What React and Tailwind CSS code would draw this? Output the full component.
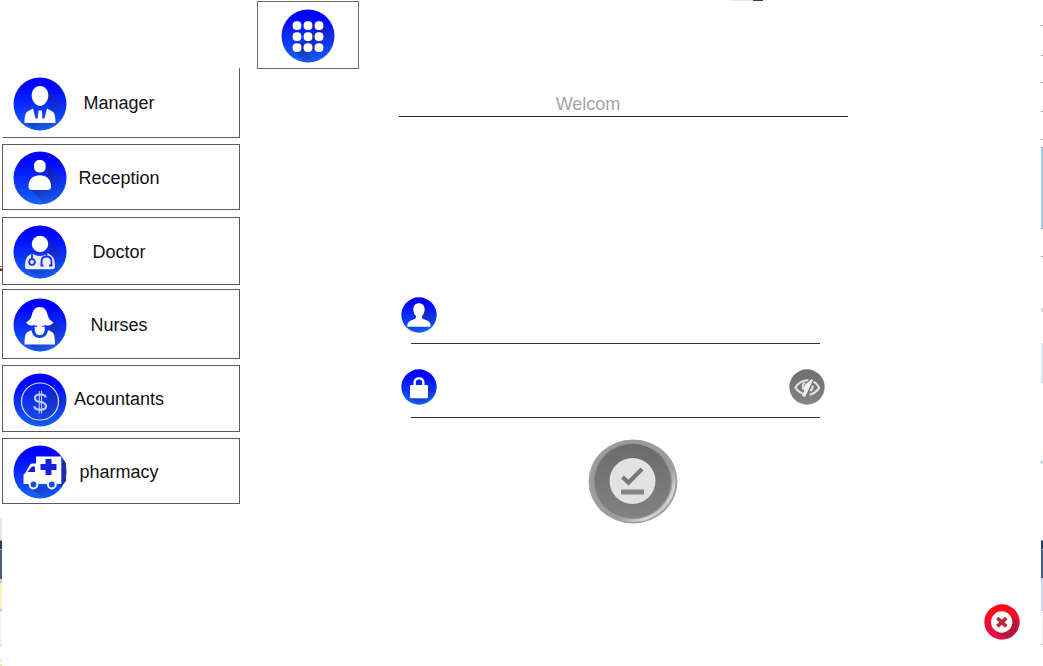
import { useId } from "react";

function Disc({ className, top = "#0000ff", bottom = "#1464f8", shadow, children }) {
  const id = useId();
  return (
    <svg viewBox="0 0 54 54" className={className} aria-hidden="true">
      <defs>
        <linearGradient id={`${id}f`} x1="0" y1="0" x2="0" y2="1">
          <stop offset="0.12" stopColor={top} />
          <stop offset="1" stopColor={bottom} />
        </linearGradient>
        <linearGradient id={`${id}s`} x1="0.2" y1="0.2" x2="0.9" y2="0.9">
          <stop offset="0.15" stopColor="#22207c" stopOpacity="0.65" />
          <stop offset="0.85" stopColor="#22308c" stopOpacity="0" />
        </linearGradient>
        <clipPath id={`${id}c`}>
          <circle cx="27" cy="27" r="26.5" />
        </clipPath>
      </defs>
      <circle cx="27" cy="27" r="26.5" fill={`url(#${id}f)`} />
      {shadow && <path d={shadow} fill={`url(#${id}s)`} clipPath={`url(#${id}c)`} />}
      {children}
    </svg>
  );
}

function ManagerIcon() {
  return (
    <Disc className="size-[54px] shrink-0" shadow="M32 11L54 33V54H24L12 46L42 44Z">
      <path fill="#fff" d="M27 9c5 0 8.300 4 8.300 9.300S31.500 29 27 29s-8.300-5.400-8.300-10.700S22 9 27 9z" />
      <path fill="#fff" d="M20 31.500L14.500 34.500C12 36 11.500 41 11.500 46H42.500C42.500 41 42 36 39.500 34.500L34 31.500L31.500 41.500H29.300L29 33.500H25.500L24.700 41.500H22.500Z" />
    </Disc>
  );
}

function ReceptionIcon() {
  return (
    <Disc className="size-[54px] shrink-0" shadow="M32 12L54 34V54H34L17 38L37 38Z">
      <rect x="21" y="9" width="11.600" height="12.400" rx="5" fill="#fff" />
      <path fill="#fff" d="M15.500 35.500C15.500 28 20.500 24.300 26.800 24.300S38 28 38 35.500C38 37.800 37 39 35 39H18.500C16.500 39 15.500 37.800 15.500 35.500Z" />
    </Disc>
  );
}

function DoctorIcon() {
  return (
    <Disc className="size-[54px] shrink-0" shadow="M34 14L54 34V54H26L13 43L42 42Z">
      <circle cx="27" cy="19" r="8.200" fill="#fff" />
      <path fill="#eeeeff" d="M19.500 28L15 31C12.500 33.500 12 38 12 41.500Q12 44.300 15 44.300H39Q42 44.300 42 41.500C42 38 41.500 33.500 39 31L34.500 28Q27 32.500 19.500 28Z" />
      <g fill="none" stroke="#1a34ee" strokeWidth="1.800">
        <path d="M19 28V34" />
        <circle cx="19" cy="37" r="2.900" />
        <path d="M19 27.500Q27 32.500 34.500 27.500M33.500 29V31.500M28.500 41V36.500Q28.500 31.500 33.500 31.500Q38.500 31.500 38.500 36.500V41M27.500 40.500H30.500M36 40.500H39.500" />
      </g>
    </Disc>
  );
}

function NurseIcon() {
  return (
    <Disc className="size-[54px] shrink-0" shadow="M34 22L41 24L54 34V54H26L13 45L42 44Z">
      <path fill="#fff" d="M26.700 9C31.500 9 33.500 12.500 34.500 16.500C35.500 20.500 37 22.500 40.500 24.500C38.500 27.300 35.500 27.800 32.500 27.500Q32 31 29.800 31.800H23.700Q21.500 31 21 27.500C18 27.800 15.200 27.300 13 24.500C16.500 22.500 18 20.500 19 16.500C20 12.500 22 9 26.700 9Z" />
      <path fill="none" stroke="#1428f8" strokeWidth="1.300" d="M20.500 28Q22.500 27.600 24 28.800M33 28Q31 27.600 29.500 28.800" />
      <path fill="#fff" d="M18.500 32L14.500 34C12 35.500 11.500 40 11.500 46.500H42C42 40 41.500 35.500 39 34L35 32C34.500 37 31 40 26.700 40S19 37 18.500 32Z" />
      <path fill="#fff" d="M21.500 30.500H32Q31.500 37.300 26.700 37.300T21.500 30.500Z" />
    </Disc>
  );
}

function AccountantIcon() {
  return (
    <Disc className="size-[54px] shrink-0" shadow="M40 16L54 30V54H30L14 42L27 46Z">
      <circle cx="27" cy="28.500" r="18.500" fill="#193ccc" fillOpacity="0.35" stroke="#dcdcff" strokeWidth="1.200" />
      <g fill="none" stroke="#c4ccff" strokeWidth="2.200">
        <path d="M32.500 24.500Q32.500 21.500 27.300 21.500T22 25Q22 28.300 27.300 29T33 33Q33 36.800 27.300 36.800T21.500 33.300" />
        <path strokeWidth="1.100" d="M26.300 18V40.500M28.500 18V40.500" />
      </g>
    </Disc>
  );
}

function PharmacyIcon() {
  return (
    <Disc className="size-[54px] shrink-0" shadow="M48 12L54 16V54H32L18 43L48 39Z">
      <path fill="#1a2cae" d="M48 12L53 18V36L48 41Z" />
      <path fill="#fff" d="M23 11.500H48.300V39H43.500A5 5 0 0 0 34 39H25.500A5 5 0 0 0 16 39H10.500V29.500L12 28.500L16.500 20.500Q17.500 18.500 19.500 18.500H23Z" />
      <path fill="#1420e8" d="M22 21.500V27H14.500L18 22.500Q18.500 21.500 20 21.500Z" />
      <path fill="#1420e0" d="M32.500 14H38.500V19H43.500V25H38.500V30H32.500V25H27.500V19H32.500Z" />
      <circle cx="20.500" cy="39.500" r="3.900" fill="#1848f0" stroke="#fff" strokeWidth="2" />
      <circle cx="38.800" cy="39.500" r="3.900" fill="#1848f0" stroke="#fff" strokeWidth="2" />
    </Disc>
  );
}

function GridIcon() {
  const steps = [16, 27, 38];
  return (
    <Disc className="size-[54px] shrink-0" shadow="M41 14L54 27V54H24L14 41Z">
      {steps.map((y) =>
        steps.map((x) => (
          <rect key={`${x}-${y}`} x={x - 4.4} y={y - 3.8} width="8.800" height="8.800" rx="4" fill="#fff" />
        ))
      )}
    </Disc>
  );
}

function UserIcon() {
  return (
    <Disc className="size-9 shrink-0" shadow="M35 14L54 33V54H28L10 45Z">
      <path fill="#fff" d="M27 9.500C32 9.500 35.500 13 35.500 18C35.500 23 34 26 31.500 28.500C31.500 31.500 32 32.500 34.500 33.500C39.500 35.500 44.500 36.500 44.500 44.500H9.500C9.500 36.500 14.500 35.500 19.500 33.500C22 32.500 22.500 31.500 22.500 28.500C20 26 18.500 23 18.500 18C18.500 13 22 9.500 27 9.500Z" />
    </Disc>
  );
}

function LockIcon() {
  return (
    <Disc className="size-9 shrink-0" shadow="M40 24L54 37V54H28L14 43Z">
      <path fill="none" stroke="#fff" strokeWidth="3.600" d="M20.500 25V20.500Q20.500 14 27 14T33.500 20.500V25" />
      <rect x="13.500" y="24" width="27" height="20" rx="2" fill="#fff" />
    </Disc>
  );
}

function HiddenEyeIcon() {
  return (
    <Disc className="size-9" top="#707070" bottom="#858585">
      <g fill="none" stroke="#e4e4e4" strokeWidth="3">
        <path d="M24 38Q15 36 9.500 28Q17 16.500 29 17" />
        <path d="M37 19Q42 22 45.500 28Q40 36.500 31 38.500" />
        <path d="M22 31Q18.500 25 23.500 20" />
        <path d="M35.500 25Q36 30 32 33" />
      </g>
      <path fill="#f0f0f0" d="M33.500 15L36 17L24 42L19.500 40L23 33Q20 24 29 20Z" />
    </Disc>
  );
}

function SubmitIcon() {
  return (
    <svg viewBox="0 0 90 85" className="h-[85px] w-[90px]" aria-hidden="true">
      <defs>
        <linearGradient id="rim" x1="0" y1="0" x2="1" y2="1">
          <stop offset="0" stopColor="#9a9a9a" />
          <stop offset="0.65" stopColor="#9c9c9c" />
          <stop offset="0.82" stopColor="#d8d8d8" />
          <stop offset="1" stopColor="#888" />
        </linearGradient>
        <linearGradient id="face" x1="0" y1="0" x2="0" y2="1">
          <stop offset="0" stopColor="#6b6b6b" />
          <stop offset="1" stopColor="#828282" />
        </linearGradient>
      </defs>
      <ellipse cx="45" cy="42.500" rx="44.500" ry="42" fill="#a0a0a0" />
      <ellipse cx="45" cy="42" rx="41" ry="39.500" fill="none" stroke="url(#rim)" strokeWidth="3" />
      <ellipse cx="44.500" cy="42" rx="38.500" ry="37.500" fill="url(#face)" stroke="#909090" />
      <circle cx="44.500" cy="42" r="23" fill="#e2e2e2" />
      <path d="M34.500 38L40.500 43.500L54 30" fill="none" stroke="#777" strokeWidth="4.200" />
      <path d="M33 53H56" stroke="#858585" strokeWidth="5" />
    </svg>
  );
}

function CloseIcon() {
  return (
    <Disc className="size-9" top="#ff0a14" bottom="#e01050">
      <path d="M43 18L53 30Q50 45 35 52L18 42Z" fill="#a81c3c" fillOpacity="0.8" />
      <circle cx="26.500" cy="27" r="16" fill="#fff" />
      <path d="M20 21L33.500 33.500M33.500 21L20 33.500" stroke="#b82840" strokeWidth="5.500" />
    </Disc>
  );
}

const roles = [
  { label: "Manager", Icon: ManagerIcon, box: "h-[70px] border-r border-b border-l border-l-transparent" },
  { label: "Reception", Icon: ReceptionIcon, box: "mt-1.5 h-[66px] border" },
  { label: "Doctor", Icon: DoctorIcon, box: "mt-[7px] h-[68px] border" },
  { label: "Nurses", Icon: NurseIcon, box: "mt-1 h-[70px] border" },
  { label: "Acountants", Icon: AccountantIcon, box: "mt-1.5 h-[67px] border" },
  { label: "pharmacy", Icon: PharmacyIcon, box: "mt-1.5 h-[66px] border" },
];

const leftEdge = [
  "h-[266px]", "h-px bg-[#80786c]", "h-px", "h-px bg-[#e0a060]", "h-[2px] bg-[#40382c]", "h-[247px]",
  "h-[22px] bg-[#e6e5ec]", "h-px bg-[#8d94ad]", "h-[8px] bg-[#2b3b66]", "h-px bg-[#98a4c0]",
  "h-[29px] bg-[#475b86]", "h-[3px] bg-[#c8d0e2]", "h-px bg-[#e8c060]", "h-[26px] bg-[#fff0b8]",
  "h-px bg-[#e8c060]", "h-[2px] bg-[#ccd2e0]", "h-px", "h-[32px] bg-[#f5f5f5]", "h-px bg-[#ccc]",
  "h-[14px]", "h-px bg-[#f2da80]", "h-[3px]", "h-[2px] bg-[#f4e4a8]",
];

const rightEdge = [
  "h-[25px]", "h-px bg-[#9a9cb4]", "h-[29px]", "h-px bg-[#9a9cb4]", "h-[26px]", "h-px bg-[#9a9cb4]",
  "h-[28px]", "h-px bg-[#9a9cb4]", "h-[27px]", "h-px bg-[#9a9cb4]", "h-[7px]", "h-px bg-[#74a8cc]",
  "h-[80px] bg-[#a8cce0]", "h-px bg-[#9a9cb4]", "h-[27px]", "h-px bg-[#9a9cb4]", "h-[51px]",
  "h-[4px] bg-[#d8d8dc]", "h-[31px]", "h-[40px] bg-[#dfe6f4]", "h-[78px]", "h-[2px] w-px bg-[#50b0e8]",
  "h-[77px]", "h-px bg-[#8d94ad]", "h-[8px] bg-[#2b3b66]", "h-px bg-[#98a4c0]",
  "h-[28px] bg-[#475b86]", "h-[33px] bg-[#ccd6e8]", "h-px", "h-[32px] bg-[#f5f5f5]", "h-px bg-[#ccc]",
];

function Edge({ segments }) {
  return (
    <div className="w-0.5 shrink-0" aria-hidden="true">
      {segments.map((segment, i) => (
        <div key={i} className={segment} />
      ))}
    </div>
  );
}

export default function App() {
  return (
    <div className="relative flex min-h-screen bg-white font-['Liberation_Sans',Arial,sans-serif] text-lg text-[#111]">
      <div className="absolute top-0 left-[731px] flex h-px w-8" aria-hidden="true">
        <div className="w-[22px] bg-[#dfe6f8]" />
        <div className="flex-1 bg-[#2b3b66]" />
      </div>
      <Edge segments={leftEdge} />

      <nav className="flex w-[238px] shrink-0 flex-col pt-[68px]" aria-label="Roles">
        {roles.map(({ label, Icon, box }) => (
          <button key={label} type="button" className={`flex items-center border-[#5c5c5c] pt-0.5 pl-2.5 ${box}`}>
            <Icon />
            <span className="w-[104px] pb-px text-center">{label}</span>
          </button>
        ))}
      </nav>

      <main className="flex min-w-0 flex-1">
        <button
          type="button"
          aria-label="Menu"
          className="mt-px ml-[17px] flex h-[68px] w-[102px] shrink-0 items-center justify-center border border-[#6c6c6c] pt-0.5"
        >
          <GridIcon />
        </button>

        <div className="ml-10 min-w-0 max-w-[449px] flex-1 pt-[92px]">
          <h1 className="border-b border-[#222] pr-[71px] text-center leading-6 text-[#a4a4a4]">Welcom</h1>
          <form className="mt-[179px] flex flex-col" onSubmit={(e) => e.preventDefault()}>
            <div className="mr-7 ml-3 flex h-12 items-start border-b border-[#333]">
              <label htmlFor="user" aria-label="User name" className="-ml-2.5 pt-px">
                <UserIcon />
              </label>
              <input id="user" type="text" className="ml-2 h-9 min-w-0 flex-1 outline-none" />
            </div>
            <div className="mt-6 mr-7 ml-3 flex h-[50px] items-start border-b border-[#333]">
              <label htmlFor="password" aria-label="Password" className="-ml-2.5 pt-px">
                <LockIcon />
              </label>
              <input id="password" type="password" className="ml-2 h-9 min-w-0 flex-1 outline-none" />
              <button type="button" aria-label="Show password" className="-mr-[5px] pt-px">
                <HiddenEyeIcon />
              </button>
            </div>
            <button type="submit" aria-label="Sign in" className="mt-[21px] ml-[18px] self-center">
              <SubmitIcon />
            </button>
          </form>
        </div>

        <button type="button" aria-label="Close" className="mr-[21px] mb-[26px] ml-auto self-end">
          <CloseIcon />
        </button>
      </main>
      <Edge segments={rightEdge} />
    </div>
  );
}
